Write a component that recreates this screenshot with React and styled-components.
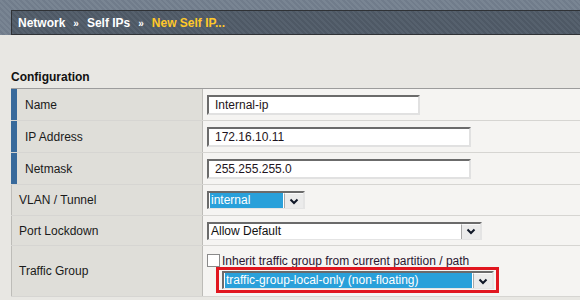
import React from "react";
import styled, { createGlobalStyle } from "styled-components";

const GlobalStyle = createGlobalStyle`
  html, body {
    margin: 0;
    padding: 0;
    background: #e8e7e3;
    overflow: hidden;
  }
  body {
    font-family: "Liberation Sans", Arial, sans-serif;
    font-size: 12px;
    color: #222;
  }
`;

const Page = styled.div`
  width: 580px;
  height: 300px;
  overflow: hidden;
`;

const Header = styled.div`
  height: 35px;
  box-sizing: border-box;
  padding: 10px 0 0 11px;
  background-color: #74808f;
  background-image: repeating-linear-gradient(
    45deg,
    rgba(255, 255, 255, 0.04) 0 2px,
    rgba(0, 0, 0, 0.03) 2px 4px
  );
`;

const Crumbs = styled.div`
  height: 25px;
  box-sizing: border-box;
  display: flex;
  align-items: center;
  padding-left: 6px;
  background-color: #515c69;
  background-image: repeating-linear-gradient(
    45deg,
    rgba(255, 255, 255, 0.03) 0 2px,
    rgba(0, 0, 0, 0.04) 2px 4px
  );
  border-top: 1px solid #2f3236;
  border-bottom: 1px solid #2f3236;
  border-left: 1px solid #2f3236;
`;

const Crumb = styled.span`
  font-weight: bold;
  font-size: 12px;
  color: ${(p) => (p.$current ? "#ffc829" : "#ffffff")};
`;

const Sep = styled.span`
  font-weight: bold;
  font-size: 10px;
  color: #ffffff;
  margin: 2px 8px 0 8px;
`;

const Content = styled.div`
  padding: 35px 0 0 11px;
`;

const SectionTitle = styled.div`
  font-weight: bold;
  font-size: 12px;
  color: #111;
  height: 18px;
  line-height: 14px;
`;

const Table = styled.div`
  border-top: 1px solid #9c9c9c;
  display: flex;
  flex-direction: column;
`;

const Row = styled.div`
  display: flex;
  box-sizing: border-box;
  height: ${(p) => p.$h}px;
  border-bottom: 1px solid #d6d5d2;
`;

const Label = styled.div`
  width: 192px;
  flex: none;
  box-sizing: border-box;
  display: flex;
  align-items: center;
  padding-left: ${(p) => (p.$required ? 8 : 7)}px;
  background: #dfded9;
  border-left: ${(p) => (p.$required ? "6px solid #37699b" : "1px solid #bdbcb8")};
  border-right: 1px solid #bdbcb8;
  color: #1a1a1a;
`;

const Value = styled.div`
  flex: 1;
  display: flex;
  flex-direction: ${(p) => (p.$stack ? "column" : "row")};
  align-items: ${(p) => (p.$stack ? "flex-start" : "center")};
  padding: ${(p) => (p.$stack ? "8px 0 0 4px" : "0 0 0 4px")};
  background: #f5f4f2;
`;

const TextInput = styled.div`
  width: ${(p) => p.$w}px;
  height: 20px;
  box-sizing: border-box;
  background: #fff;
  border-top: 2px solid #6b6b6b;
  border-left: 2px solid #6b6b6b;
  border-right: 2px solid #e1e1e1;
  border-bottom: 2px solid #e1e1e1;
  padding-left: 6px;
  line-height: 16px;
  color: #1e1420;
`;

const Select = styled.div`
  width: ${(p) => p.$w}px;
  height: 18px;
  box-sizing: border-box;
  display: flex;
  background: #fff;
  border-top: 2px solid #6b6b6b;
  border-left: 2px solid #6b6b6b;
  border-right: 2px solid #e4e4e4;
  border-bottom: 1px solid #e4e4e4;
`;

const SelectText = styled.div`
  flex: 1;
  margin: 0 1px 0 1px;
  padding-left: 1px;
  line-height: 15px;
  font-size: 12px;
  background: ${(p) => (p.$selected ? "#29a0da" : "transparent")};
  color: ${(p) => (p.$selected ? "#ffffff" : "#111")};
`;

const SelectArrow = styled.div`
  width: 18px;
  flex: none;
  display: flex;
  align-items: center;
  justify-content: center;
  background: #ebebeb;
  border-left: 1px solid #a8a8a8;
  border-top: 1px solid #fafafa;
`;

const CheckLine = styled.label`
  display: flex;
  align-items: center;
  height: 13px;
  color: #2a1630;
`;

const Box = styled.span`
  width: 13px;
  height: 13px;
  box-sizing: border-box;
  background: #fff;
  border: 1px solid #8a8a8a;
  margin-right: 2px;
`;

const Highlight = styled.div`
  margin: 0 0 0 9px;
  border: 3px solid #e1161f;
  padding: 1px 2px 1px 3px;
`;

const Chevron = () => (
  <svg width="10" height="7" viewBox="0 0 10 7">
    <polyline
      points="1.5,1.5 5,5 8.5,1.5"
      fill="none"
      stroke="#101828"
      strokeWidth="2"
    />
  </svg>
);

const Dropdown = ({ width, text, selected }) => (
  <Select $w={width}>
    <SelectText $selected={selected}>{text}</SelectText>
    <SelectArrow>
      <Chevron />
    </SelectArrow>
  </Select>
);

export default function App() {
  return (
    <Page>
      <GlobalStyle />
      <Header>
        <Crumbs>
          <Crumb>Network</Crumb>
          <Sep>»</Sep>
          <Crumb>Self IPs</Crumb>
          <Sep>»</Sep>
          <Crumb $current>New Self IP...</Crumb>
        </Crumbs>
      </Header>
      <Content>
        <SectionTitle>Configuration</SectionTitle>
        <Table>
          <Row $h={32}>
            <Label $required>Name</Label>
            <Value>
              <TextInput $w={213}>Internal-ip</TextInput>
            </Value>
          </Row>
          <Row $h={32}>
            <Label $required>IP Address</Label>
            <Value>
              <TextInput $w={264}>172.16.10.11</TextInput>
            </Value>
          </Row>
          <Row $h={32}>
            <Label $required>Netmask</Label>
            <Value>
              <TextInput $w={264}>255.255.255.0</TextInput>
            </Value>
          </Row>
          <Row $h={31}>
            <Label>VLAN / Tunnel</Label>
            <Value>
              <Dropdown width={98} text="internal" selected />
            </Value>
          </Row>
          <Row $h={30}>
            <Label>Port Lockdown</Label>
            <Value>
              <Dropdown width={275} text="Allow Default" />
            </Value>
          </Row>
          <Row $h={51}>
            <Label>Traffic Group</Label>
            <Value $stack>
              <CheckLine>
                <Box />
                Inherit traffic group from current partition / path
              </CheckLine>
              <Highlight>
                <Dropdown width={272} text="traffic-group-local-only (non-floating)" selected />
              </Highlight>
            </Value>
          </Row>
        </Table>
      </Content>
    </Page>
  );
}
